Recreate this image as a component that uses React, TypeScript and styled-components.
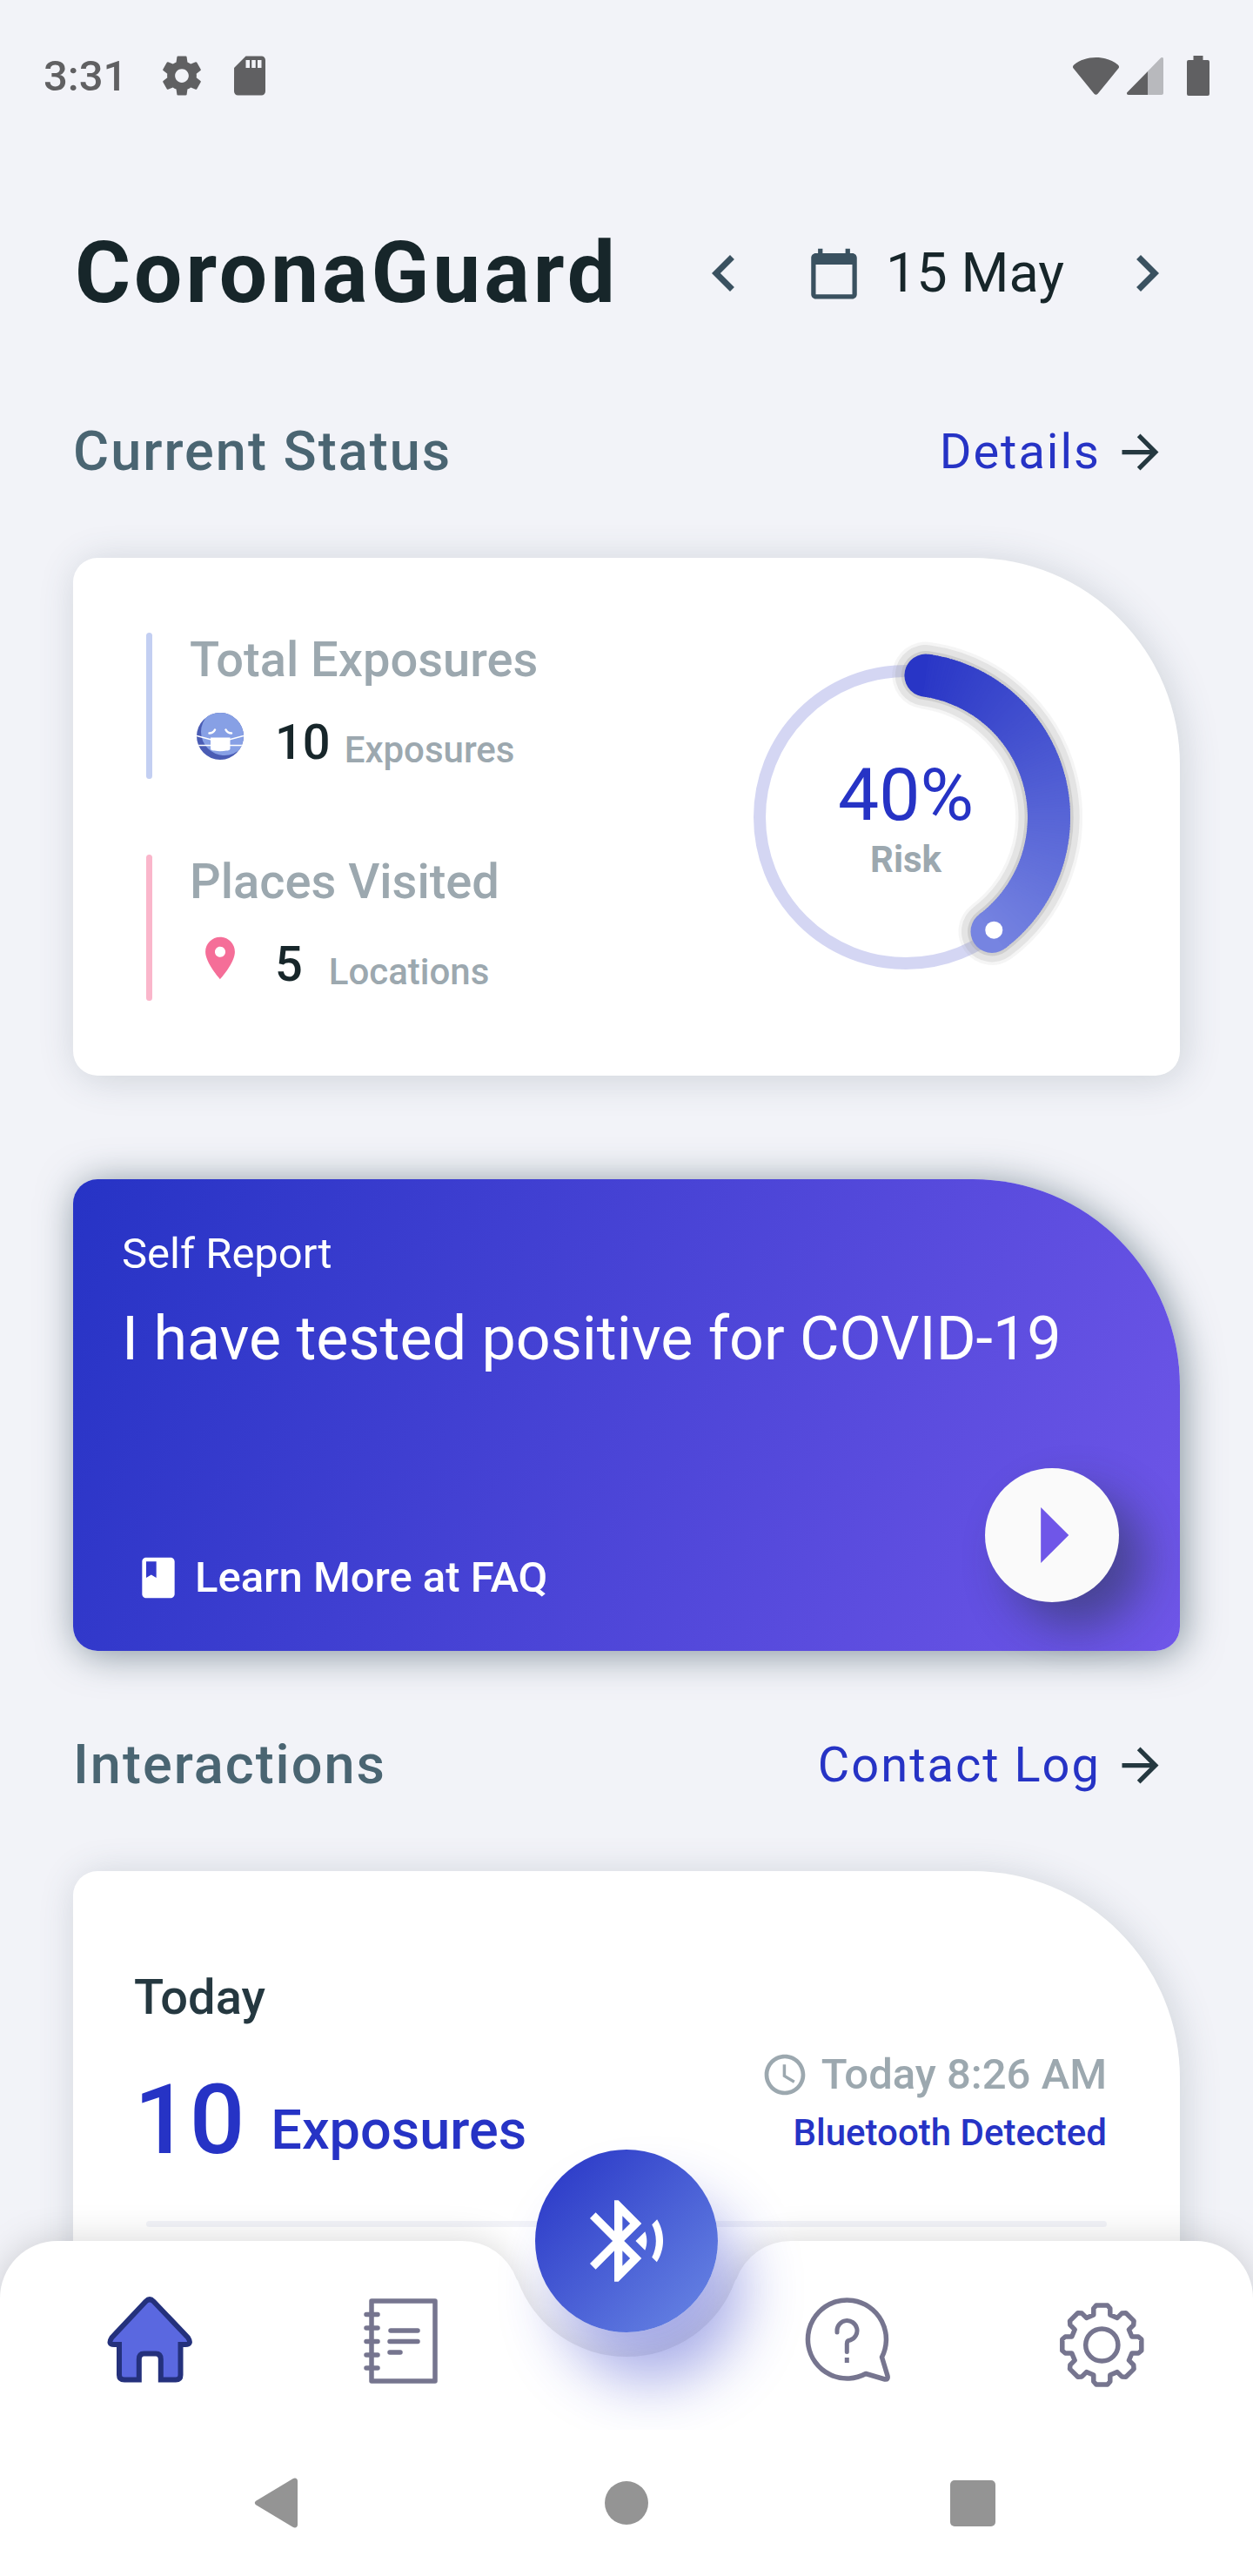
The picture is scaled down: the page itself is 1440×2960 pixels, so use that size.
import React from 'react';
import styled, { createGlobalStyle, ThemeProvider } from 'styled-components';

const theme = {
  background: '#f2f3f8',
  primary: '#2633c5',
  violet: '#6f56e8',
  pink: '#f56e98',
  ink: '#17262a',
  text: '#253840',
  slate: '#3a5160',
  heading: '#4a6572',
  muted: '#9ca8af',
  system: '#606062',
  tab: '#76758f',
};

const GlobalStyle = createGlobalStyle`
  *, *::before, *::after { box-sizing: border-box; }
  body {
    margin: 0;
    background: ${theme.background};
    font-family: Roboto, "Liberation Sans", sans-serif;
    color: ${theme.ink};
  }
  h1, h2, p { margin: 0; font-weight: inherit; }
  button { margin: 0; padding: 0; border: 0; background: none; font: inherit; color: inherit; cursor: pointer; }
  a { color: inherit; text-decoration: none; }
  svg { display: block; flex: none; }
`;

/* ---------- Page ---------- */

const Page = styled.div`
  min-height: 100vh;
  display: flex;
  flex-direction: column;
`;

const StatusBar = styled.div`
  display: flex;
  align-items: center;
  justify-content: space-between;
  height: 174px;
  padding: 0 50px;
  color: ${(p) => p.theme.system};
  font-size: 49px;
  font-weight: 500;
`;

const StatusGroup = styled.div<{ $gap: number }>`
  display: flex;
  align-items: center;
  gap: ${(p) => p.$gap}px;
`;

const Clock = styled.time`
  margin-right: 12px;
`;

const Header = styled.header`
  display: flex;
  align-items: center;
  justify-content: space-between;
  margin-top: 84px;
  padding: 0 56px 0 86px;
`;

const Title = styled.h1`
  font-size: 98px;
  line-height: 112px;
  font-weight: 700;
  letter-spacing: 4px;
`;

const DatePicker = styled.div`
  display: flex;
  align-items: center;
  color: ${(p) => p.theme.slate};
`;

const StepButton = styled.button`
  display: flex;
  justify-content: center;
  width: 133px;
`;

const DateButton = styled.button`
  display: flex;
  align-items: center;
  gap: 28px;
  padding: 0 28px;
  font-size: 63px;
  line-height: 74px;
  white-space: nowrap;
`;

const DateText = styled.span`
  color: ${(p) => p.theme.ink};
`;

const Main = styled.main`
  flex: 1;
  display: flex;
  flex-direction: column;
  padding: 0 84px;
`;

const SectionHead = styled.div<{ $space: number }>`
  display: flex;
  align-items: center;
  justify-content: space-between;
  height: 90px;
  margin: ${(p) => p.$space}px 0 77px;
  padding-right: 14px;
`;

const SectionTitle = styled.h2`
  font-size: 63px;
  line-height: 74px;
  font-weight: 500;
  letter-spacing: 2px;
  color: ${(p) => p.theme.heading};
`;

const MoreLink = styled.a`
  display: flex;
  align-items: center;
  gap: 14px;
  font-size: 56px;
  line-height: 66px;
  letter-spacing: 2px;
  color: ${(p) => p.theme.primary};

  svg { color: ${(p) => p.theme.text}; }
`;

const Card = styled.section`
  border-radius: 28px 238px 28px 28px;
  background: #fff;
  box-shadow: 4px 4px 44px rgba(58, 81, 96, 0.2);
`;

/* ---------- Current status ---------- */

const StatusCard = styled(Card)`
  display: flex;
  align-items: center;
  justify-content: space-between;
  padding: 86px 112px 86px 84px;
`;

const Stats = styled.div`
  display: flex;
  flex-direction: column;
  gap: 87px;
`;

const Stat = styled.div`
  display: flex;
  gap: 43px;
`;

const StatBar = styled.div<{ $color: string }>`
  width: 7px;
  border-radius: 4px;
  background: ${(p) => p.$color};
`;

const StatBody = styled.div`
  padding-bottom: 9px;
`;

const StatLabel = styled.p`
  font-size: 56px;
  line-height: 62px;
  font-weight: 500;
  color: ${(p) => p.theme.muted};
`;

const StatRow = styled.p`
  display: flex;
  align-items: flex-end;
  margin-top: 17px;
  font-weight: 500;
`;

const StatIcon = styled.span`
  display: flex;
  align-items: center;
  justify-content: center;
  width: 70px;
  height: 80px;
  margin-right: 28px;
  color: ${(p) => p.theme.pink};
`;

const StatValue = styled.span`
  font-size: 56px;
  line-height: 66px;
  white-space: pre;
`;

const StatUnit = styled.span`
  margin-left: 16px;
  font-size: 42px;
  line-height: 49px;
  color: ${(p) => p.theme.muted};
`;

const Gauge = styled.div`
  display: grid;
  place-items: center;

  > * { grid-area: 1 / 1; }
`;

const GaugeText = styled.div`
  text-align: center;
`;

const GaugeValue = styled.p`
  font-size: 84px;
  line-height: 98px;
  color: ${(p) => p.theme.primary};
`;

const GaugeLabel = styled.p`
  font-size: 42px;
  line-height: 50px;
  font-weight: 700;
  color: ${(p) => p.theme.muted};
`;

/* ---------- Self report ---------- */

const ReportCard = styled(Card)`
  margin-top: 119px;
  padding: 56px 70px 56px 56px;
  color: #fff;
  background: linear-gradient(113deg, ${(p) => p.theme.primary}, ${(p) => p.theme.violet});
  box-shadow: 4px 4px 44px rgba(58, 81, 96, 0.6);
`;

const ReportKicker = styled.p`
  font-size: 49px;
  line-height: 60px;
`;

const ReportTitle = styled.h2`
  margin-top: 26px;
  font-size: 70px;
  line-height: 82px;
`;

const ReportActions = styled.div`
  display: flex;
  align-items: flex-end;
  justify-content: space-between;
  margin-top: 108px;
`;

const FaqLink = styled.a`
  display: flex;
  align-items: center;
  gap: 14px;
  padding-left: 14px;
  font-size: 49px;
  line-height: 56px;
  font-weight: 500;
`;

const PlayButton = styled.button`
  width: 154px;
  height: 154px;
  border-radius: 50%;
  background: #fafafa;
  color: ${(p) => p.theme.violet};
  box-shadow: 28px 28px 52px rgba(33, 51, 51, 0.46);
`;

/* ---------- Interactions ---------- */

const LogCard = styled(Card)`
  flex: 1;
  padding: 112px 84px 385px 70px;
  border-bottom-left-radius: 0;
  border-bottom-right-radius: 0;
`;

const LogRow = styled.div`
  display: flex;
  align-items: flex-end;
  justify-content: space-between;
`;

const LogDay = styled.p`
  font-size: 56px;
  line-height: 66px;
  font-weight: 500;
  color: ${(p) => p.theme.text};
`;

const LogTotal = styled.p`
  display: flex;
  align-items: flex-end;
  gap: 30px;
  margin-top: 42px;
  font-weight: 500;
  color: ${(p) => p.theme.primary};
`;

const LogCount = styled.span`
  font-size: 112px;
  line-height: 131px;
`;

const LogUnit = styled.span`
  margin-bottom: 16px;
  font-size: 63px;
  line-height: 74px;
`;

const LogMeta = styled.div`
  display: flex;
  flex-direction: column;
  align-items: flex-end;
  gap: 14px;
  margin-bottom: 26px;
  font-weight: 500;
`;

const LogTime = styled.p`
  display: flex;
  align-items: center;
  gap: 14px;
  font-size: 49px;
  line-height: 56px;
  color: ${(p) => p.theme.muted};
`;

const LogSource = styled.p`
  font-size: 42px;
  line-height: 49px;
  color: ${(p) => p.theme.primary};
`;

const Divider = styled.hr`
  height: 7px;
  margin: 51px 0 0 14px;
  border: 0;
  border-radius: 4px;
  background: ${(p) => p.theme.background};
`;

/* ---------- Bottom navigation ---------- */

const BottomDock = styled.div`
  position: fixed;
  left: 0;
  right: 0;
  bottom: 0;
`;

const TabBar = styled.nav`
  display: grid;

  > * { grid-area: 1 / 1; }
`;

const TabShape = styled.div`
  display: flex;
  filter: drop-shadow(0 0 20px rgba(0, 0, 0, 0.16));
`;

const TabEdge = styled.div<{ $side: 'left' | 'right' }>`
  flex: 1;
  background: #fff;
  border-top-${(p) => p.$side}-radius: 66px;
`;

const Notch = styled.svg`
  margin: 0 -1px;
`;

const Tabs = styled.div`
  position: relative;
  display: grid;
  grid-template-columns: 1fr 1fr 224px 1fr 1fr;
  padding: 58px 28px 47px;
`;

const Tab = styled.button<{ $column: number }>`
  grid-column: ${(p) => p.$column};
  justify-self: center;
  color: ${(p) => p.theme.tab};
`;

const ScanButton = styled.button`
  position: relative;
  display: flex;
  align-items: center;
  justify-content: center;
  justify-self: center;
  width: 210px;
  height: 210px;
  margin-top: -105px;
  border-radius: 50%;
  color: #fff;
  background: linear-gradient(135deg, ${(p) => p.theme.primary}, #6a88e5);
  box-shadow: 28px 56px 68px rgba(38, 51, 197, 0.4);
`;

const SystemBar = styled.div`
  position: relative;
  display: flex;
  align-items: center;
  justify-content: center;
  gap: 344px;
  height: 168px;
  background: #fff;
  color: #949494;
`;

/* ---------- Icons ---------- */

const Glyph = ({ d, size }: { d: string; size: number }) => (
  <svg width={size} height={size} viewBox="0 0 24 24" fill="currentColor" aria-hidden="true">
    <path d={d} />
  </svg>
);

const icons = {
  settings:
    'M19.43 12.98c.04-.32.07-.64.07-.98s-.03-.66-.07-.98l2.11-1.65c.19-.15.24-.42.12-.64l-2-3.46c-.12-.22-.39-.3-.61-.22l-2.49 1c-.52-.4-1.08-.73-1.69-.98l-.38-2.65C14.46 2.18 14.25 2 14 2h-4c-.25 0-.46.18-.49.42l-.38 2.65c-.61.25-1.17.59-1.69.98l-2.49-1c-.23-.09-.49 0-.61.22l-2 3.46c-.13.22-.07.49.12.64l2.11 1.65c-.04.32-.07.65-.07.98s.03.66.07.98l-2.11 1.65c-.19.15-.24.42-.12.64l2 3.46c.12.22.39.3.61.22l2.49-1c.52.4 1.08.73 1.69.98l.38 2.65c.03.24.24.42.49.42h4c.25 0 .46-.18.49-.42l.38-2.65c.61-.25 1.17-.59 1.69-.98l2.49 1c.23.09.49 0 .61-.22l2-3.46c.12-.22.07-.49-.12-.64l-2.11-1.65zM12 15.5c-1.93 0-3.5-1.57-3.5-3.5s1.57-3.5 3.5-3.5 3.5 1.57 3.5 3.5-1.57 3.5-3.5 3.5z',
  sdCard:
    'M18 2h-8L4.02 8 4 20c0 1.1.9 2 2 2h12c1.1 0 2-.9 2-2V4c0-1.1-.9-2-2-2zm-6 6h-2V4h2v4zm3 0h-2V4h2v4zm3 0h-2V4h2v4z',
  chevronLeft: 'M15.41 7.41L14 6l-6 6 6 6 1.41-1.41L10.83 12z',
  chevronRight: 'M10 6L8.59 7.41 13.17 12l-4.58 4.59L10 18l6-6z',
  calendar:
    'M20 3h-1V1h-2v2H7V1H5v2H4c-1.1 0-2 .9-2 2v16c0 1.1.9 2 2 2h16c1.1 0 2-.9 2-2V5c0-1.1-.9-2-2-2zm0 18H4V8h16v13z',
  arrow: 'M12 4l-1.41 1.41L16.17 11H4v2h12.17l-5.58 5.59L12 20l8-8z',
  pin: 'M12 2C8.13 2 5 5.13 5 9c0 5.25 7 13 7 13s7-7.75 7-13c0-3.87-3.13-7-7-7zm0 9.5c-1.38 0-2.5-1.12-2.5-2.5s1.12-2.5 2.5-2.5 2.5 1.12 2.5 2.5-1.12 2.5-2.5 2.5z',
  book: 'M18 2H6c-1.1 0-2 .9-2 2v16c0 1.1.9 2 2 2h12c1.1 0 2-.9 2-2V4c0-1.1-.9-2-2-2zM6 4h5v8l-2.5-1.5L6 12V4z',
  play: 'M10 17l5-5-5-5v10z',
  clock:
    'M11.99 2C6.47 2 2 6.48 2 12s4.47 10 9.99 10C17.52 22 22 17.52 22 12S17.52 2 11.99 2zM12 20c-4.42 0-8-3.58-8-8s3.58-8 8-8 8 3.58 8 8-3.58 8-8 8zm.5-13H11v6l5.25 3.15.75-1.23-4.5-2.67z',
  bluetooth:
    'M14.24 12.01l2.32 2.32c.28-.72.44-1.51.44-2.33 0-.82-.16-1.59-.43-2.31l-2.33 2.32zm5.29-5.3l-1.26 1.26c.63 1.21.98 2.57.98 4.02s-.36 2.82-.98 4.02l1.2 1.2c.97-1.54 1.54-3.36 1.54-5.31-.01-1.89-.55-3.67-1.48-5.19zm-3.82 1L10 2H9v7.59L4.41 5 3 6.41 8.59 12 3 17.59 4.41 19 9 14.41V22h1l5.71-5.71-4.3-4.29 4.3-4.29zM11 5.83l1.88 1.88L11 9.59V5.83zm1.88 10.46L11 18.17v-3.76l1.88 1.88z',
};

const WifiIcon = () => (
  <svg width="53" height="43" viewBox="0 0 53 43" fill="currentColor" aria-hidden="true">
    <path d="M26.5 0C17 0 8 3 1.2 8.4c-1.4 1.2-1.6 2.8-.6 4.2l23.6 29c1.3 1.6 3.3 1.6 4.6 0l23.6-29c1-1.4.8-3-.6-4.2C45 3 36 0 26.5 0z" />
  </svg>
);

const SignalIcon = () => (
  <svg width="42" height="43" viewBox="0 0 42 43" aria-hidden="true">
    <path d="M38.8.8C40.4-.8 42 0 42 1.8V41c0 1.2-.8 2-2 2H2C0 43-.6 41.2.6 40z" fill="#b8b9bd" />
    <path d="M24 16.2V43H2C0 43-.6 41.2.6 40z" fill="currentColor" />
  </svg>
);

const BatteryIcon = () => (
  <svg width="26" height="46" viewBox="0 0 26 46" fill="currentColor" aria-hidden="true">
    <path d="M7.5 0h11v5H24a2 2 0 0 1 2 2v37a2 2 0 0 1-2 2H2a2 2 0 0 1-2-2V7a2 2 0 0 1 2-2h5.5z" />
  </svg>
);

const MaskIcon = () => (
  <svg width="54" height="54" viewBox="0 0 54 54" aria-hidden="true">
    <clipPath id="face">
      <circle cx="27" cy="27" r="27" />
    </clipPath>
    <g clipPath="url(#face)">
      <rect width="54" height="54" fill="#4a5cb4" />
      <circle cx="32" cy="22" r="27" fill="#87a0e5" />
      <g fill="none" stroke="#fff">
        <path d="M0 26.5L17 31M54 26.5L37 31" strokeWidth="1.5" />
        <path d="M0 37.5H17M37 37.5H54" strokeWidth="1.5" />
        <path
          d="M14.5 23.5Q19 23.500 21 19.5M40 23.5Q35.5 23.5 33.5 19.5"
          strokeWidth="2.5"
          strokeLinecap="round"
        />
      </g>
      <path d="M16 28.5H38.5V41.5Q38 43.5 34 43.5Q27 45 20.5 43.5Q16.5 43.5 16 41.5z" fill="#fff" />
    </g>
  </svg>
);

const TabSvg = ({ children, width = 5.5 }: { children: React.ReactNode; width?: number }) => (
  <svg
    width="112"
    height="112"
    viewBox="0 0 112 112"
    fill="none"
    stroke="currentColor"
    strokeWidth={width}
    strokeLinecap="round"
    strokeLinejoin="round"
    aria-hidden="true"
  >
    {children}
  </svg>
);

const HomeIcon = () => (
  <TabSvg width={6}>
    <path
      d="M50.5 11.5Q55 7 59.5 11.5L99 53Q104 61 96 61H90.5V96Q90.5 101.500 85 101.5H67.8V78Q67.8 71.5 62 71.5H48.5Q42.8 71.5 42.8 78V101.5H26Q20 101.5 20 96V61H14Q6.5 61 11.5 53z"
      fill="#5a68e0"
      stroke="#24317c"
      strokeLinejoin="miter"
    />
  </TabSvg>
);

const NotebookIcon = () => (
  <TabSvg>
    <rect x="20" y="11" width="73" height="92" />
    <path d="M14 26.5H27M14 42H27M14 57.5H27M14 73H27M14 88H27" />
    <path d="M42 45H73M41 57.5H73M41 70H53" />
  </TabSvg>
);

const HelpIcon = () => (
  <TabSvg>
    <path d="M92.5 75.500A45 45 0 1 0 74 94.5L96 101Q100 101.5 99 97z" />
    <path d="M41 47V45.5A11.5 11.5 0 1 1 56 56Q52.3 56 52.3 60V69.5" strokeWidth="5" />
    <path d="M52.3 78.5V79.5" strokeWidth="5" strokeLinecap="square" />
  </TabSvg>
);

const TOOTH: Array<[number, number]> = [
  [-9.5, -34.5],
  [-9.5, -42],
  [-6.5, -45.5],
  [6.5, -45.5],
  [9.5, -42],
  [9.5, -34.5],
];

const gearPoints = Array.from({ length: 8 }, (_, k) => {
  const a = (k * Math.PI) / 4;
  return TOOTH.map(
    ([x, y]) => `${55.3 + x * Math.cos(a) - y * Math.sin(a)},${61.5 + x * Math.sin(a) + y * Math.cos(a)}`,
  ).join(' ');
}).join(' ');

const GearIcon = () => (
  <TabSvg>
    <polygon points={gearPoints} />
    <circle cx="55.3" cy="61.5" r="18.6" />
  </TabSvg>
);

/* ---------- Risk gauge ---------- */

const CENTER = 203;
const RADIUS = 164.5;
const ARC_START = 8;

const onRing = (deg: number): [number, number] => {
  const a = (deg * Math.PI) / 180;
  return [CENTER + RADIUS * Math.sin(a), CENTER - RADIUS * Math.cos(a)];
};

const arcPath = (from: number, to: number) => {
  const [x1, y1] = onRing(from);
  const [x2, y2] = onRing(to);
  return `M${x1} ${y1}A${RADIUS} ${RADIUS} 0 ${to - from > 180 ? 1 : 0} 1 ${x2} ${y2}`;
};

const arcColor = (deg: number) => {
  const t = Math.min(1, Math.max(0, deg / 181));
  const mix = (a: number, b: number) => Math.round(a + (b - a) * t);
  return `rgb(${mix(38, 138)}, ${mix(51, 152)}, ${mix(197, 232)})`;
};

const RiskRing = ({ angle }: { angle: number }) => {
  const end = angle + 3;
  const full = arcPath(ARC_START, end);
  const [sx, sy] = onRing(ARC_START);
  const [ex, ey] = onRing(end);
  const [dx, dy] = onRing(angle + 2);
  const slices: number[] = [];
  for (let d = ARC_START; d < end; d += 1) slices.push(d);

  return (
    <svg width="406" height="406" viewBox="0 0 406 406" fill="none" strokeLinecap="round" aria-hidden="true">
      <circle cx={CENTER} cy={CENTER} r="168" stroke="#2633c5" strokeOpacity="0.2" strokeWidth="14" />
      <path d={full} stroke="#9e9e9e" strokeOpacity="0.1" strokeWidth="77" />
      <path d={full} stroke="#9e9e9e" strokeOpacity="0.2" strokeWidth="70" />
      <path d={full} stroke="#9e9e9e" strokeOpacity="0.3" strokeWidth="56" />
      <circle cx={sx} cy={sy} r="24.5" fill={arcColor(ARC_START - 4)} />
      <circle cx={ex} cy={ey} r="24.5" fill={arcColor(end + 2)} />
      {slices.map((d) => (
        <path
          key={d}
          d={arcPath(d, Math.min(end, d + 1.5))}
          stroke={arcColor(d)}
          strokeWidth="49"
          strokeLinecap="butt"
        />
      ))}
      <circle cx={dx} cy={dy} r="10" fill="#fff" />
    </svg>
  );
};

/* ---------- Content ---------- */

const stats = [
  { label: 'Total Exposures', value: '10', unit: 'Exposures', bar: '#c3cff2', icon: <MaskIcon /> },
  {
    label: 'Places Visited',
    value: '5 ',
    unit: 'Locations',
    bar: '#fab6cb',
    icon: <Glyph d={icons.pin} size={58} />,
  },
];

const tabs = [
  { name: 'Home', column: 1, icon: <HomeIcon /> },
  { name: 'Journal', column: 2, icon: <NotebookIcon /> },
  { name: 'Help', column: 4, icon: <HelpIcon /> },
  { name: 'Settings', column: 5, icon: <GearIcon /> },
];

export default function App() {
  return (
    <ThemeProvider theme={theme}>
      <GlobalStyle />
      <Page>
        <StatusBar>
          <StatusGroup $gap={24}>
            <Clock>3:31</Clock>
            <Glyph d={icons.settings} size={54} />
            <Glyph d={icons.sdCard} size={54} />
          </StatusGroup>
          <StatusGroup $gap={9}>
            <WifiIcon />
            <StatusGroup $gap={27}>
              <SignalIcon />
              <BatteryIcon />
            </StatusGroup>
          </StatusGroup>
        </StatusBar>

        <Header>
          <Title>CoronaGuard</Title>
          <DatePicker>
            <StepButton aria-label="Previous day">
              <Glyph d={icons.chevronLeft} size={84} />
            </StepButton>
            <DateButton>
              <Glyph d={icons.calendar} size={63} />
              <DateText>15 May</DateText>
            </DateButton>
            <StepButton aria-label="Next day">
              <Glyph d={icons.chevronRight} size={84} />
            </StepButton>
          </DatePicker>
        </Header>

        <Main>
          <SectionHead $space={104}>
            <SectionTitle>Current Status</SectionTitle>
            <MoreLink href="#details">
              Details
              <Glyph d={icons.arrow} size={63} />
            </MoreLink>
          </SectionHead>

          <StatusCard>
            <Stats>
              {stats.map((s) => (
                <Stat key={s.label}>
                  <StatBar $color={s.bar} />
                  <StatBody>
                    <StatLabel>{s.label}</StatLabel>
                    <StatRow>
                      <StatIcon>{s.icon}</StatIcon>
                      <StatValue>{s.value}</StatValue>
                      <StatUnit>{s.unit}</StatUnit>
                    </StatRow>
                  </StatBody>
                </Stat>
              ))}
            </Stats>
            <Gauge>
              <RiskRing angle={140} />
              <GaugeText>
                <GaugeValue>40%</GaugeValue>
                <GaugeLabel>Risk</GaugeLabel>
              </GaugeText>
            </Gauge>
          </StatusCard>

          <ReportCard>
            <ReportKicker>Self Report</ReportKicker>
            <ReportTitle>I have tested positive for COVID-19</ReportTitle>
            <ReportActions>
              <FaqLink href="#faq">
                <Glyph d={icons.book} size={56} />
                Learn More at FAQ
              </FaqLink>
              <PlayButton aria-label="Start self report">
                <Glyph d={icons.play} size={154} />
              </PlayButton>
            </ReportActions>
          </ReportCard>

          <SectionHead $space={86}>
            <SectionTitle>Interactions</SectionTitle>
            <MoreLink href="#contact-log">
              Contact Log
              <Glyph d={icons.arrow} size={63} />
            </MoreLink>
          </SectionHead>

          <LogCard>
            <LogRow>
              <div>
                <LogDay>Today</LogDay>
                <LogTotal>
                  <LogCount>10</LogCount>
                  <LogUnit>Exposures</LogUnit>
                </LogTotal>
              </div>
              <LogMeta>
                <LogTime>
                  <Glyph d={icons.clock} size={56} />
                  Today 8:26 AM
                </LogTime>
                <LogSource>Bluetooth Detected</LogSource>
              </LogMeta>
            </LogRow>
            <Divider />
          </LogCard>
        </Main>

        <BottomDock>
          <TabBar aria-label="Main">
            <TabShape>
              <TabEdge $side="left" />
              <Notch width="380" height="217" viewBox="0 0 380 217" fill="#fff" aria-hidden="true">
                <path d="M0 0H1.1A66.5 66.5 0 0 1 63.6 43.8L65 45.5A133 133 0 0 0 315 45.5L316.4 43.8A66.5 66.5 0 0 1 378.9 0H380V217H0z" />
              </Notch>
              <TabEdge $side="right" />
            </TabShape>
            <Tabs>
              {tabs.map((t) => (
                <Tab key={t.name} $column={t.column} aria-label={t.name}>
                  {t.icon}
                </Tab>
              ))}
            </Tabs>
            <ScanButton aria-label="Scan for nearby devices">
              <Glyph d={icons.bluetooth} size={112} />
            </ScanButton>
          </TabBar>
          <SystemBar>
            <button aria-label="Back">
              <svg width="56" height="58" viewBox="0 0 56 58" fill="currentColor" aria-hidden="true">
                <path d="M2.5 26.5L44.5 1.2C47.5-.4 50 1 50 4V54C50 57 47.5 58.4 44.5 56.8L2.5 31.5C.3 30 .3 28 2.5 26.5z" />
              </svg>
            </button>
            <button aria-label="Home screen">
              <svg width="56" height="56" viewBox="0 0 56 56" fill="currentColor" aria-hidden="true">
                <circle cx="28" cy="28" r="25" />
              </svg>
            </button>
            <button aria-label="Recent apps">
              <svg width="56" height="56" viewBox="0 0 56 56" fill="currentColor" aria-hidden="true">
                <rect x="0" y="2" width="52" height="53" rx="5" />
              </svg>
            </button>
          </SystemBar>
        </BottomDock>
      </Page>
    </ThemeProvider>
  );
}
